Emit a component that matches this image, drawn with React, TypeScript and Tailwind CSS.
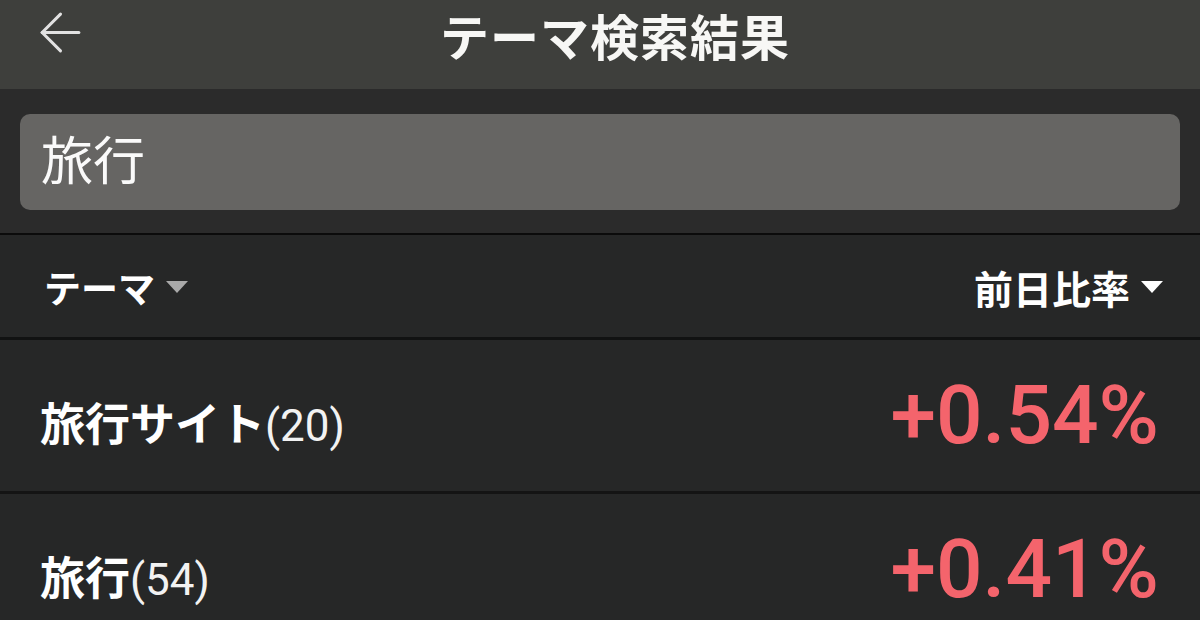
import { ArrowLeft } from "lucide-react"

type ThemeRow = {
    name: string
    count: number
    change: string
}

const rows: ThemeRow[] = [
    { name: "旅行サイト", count: 20, change: "+0.54%" },
    { name: "旅行", count: 54, change: "+0.41%" },
]

const jp = "font-['Noto_Sans_CJK_JP','Noto_Sans',sans-serif]"

function SortCaret({ className }: { className: string }) {
    return (
        <svg width="22" height="12" viewBox="0 0 22 12" className={className}>
            <path d="M0 0 H22 L11 12 Z" fill="currentColor" />
        </svg>
    )
}

export default function App() {
    return (
        <div className={`w-[1200px] h-[620px] overflow-hidden bg-[#262727] ${jp}`}>
            {/* top bar */}
            <div className="relative h-[89px] bg-[#3e3f3c] flex items-center justify-center pl-[30px]">
                <ArrowLeft className="absolute left-[29px] top-[1px] w-[63px] h-[63px] text-[#e2e2e2]" strokeWidth={1.15} />
                <h1 className="text-[49px] font-bold text-[#f7f7f5] leading-none tracking-[1px] -mt-[21px]">テーマ検索結果</h1>
            </div>

            {/* search */}
            <div className="h-[146px] bg-[#2b2b2b] px-5 pt-[25px] border-b-2 border-[#0b0b0b]">
                <div className="h-[96px] rounded-[10px] bg-[#666563] flex items-center px-[21px]">
                    <span className="text-[52px] text-[#fafafa] leading-none -mt-[9px]">旅行</span>
                </div>
            </div>

            {/* column headings */}
            <div className="h-[105px] flex items-center justify-between pl-[44px] pr-[37px] border-b-[3px] border-[#111212]">
                <div className="flex items-center gap-[11px]">
                    <span className="text-[37px] font-bold text-white leading-none mt-[2px]">テーマ</span>
                    <SortCaret className="text-[#a9a9a9] mt-[2px]" />
                </div>
                <div className="flex items-center gap-[11px]">
                    <span className="text-[39px] font-bold text-white leading-none mt-[2px]">前日比率</span>
                    <SortCaret className="text-white mt-[2px]" />
                </div>
            </div>

            {rows.map((r) => (
                <div
                    key={r.name}
                    className="h-[154px] flex items-center justify-between pl-[40px] pr-[41px] border-b-[3px] border-[#141414]"
                >
                    <div className="flex items-baseline mt-[16px]">
                        <span className="text-[45px] font-bold text-white leading-none">{r.name}</span>
                        <span className="text-[44px] text-[#f2f2f2] leading-none font-['Roboto',sans-serif]">({r.count})</span>
                    </div>
                    <span className="text-[82px] font-medium text-[#f4646c] leading-none font-['Roboto',sans-serif] -mt-[2px]">
                        {r.change}
                    </span>
                </div>
            ))}
        </div>
    )
}
